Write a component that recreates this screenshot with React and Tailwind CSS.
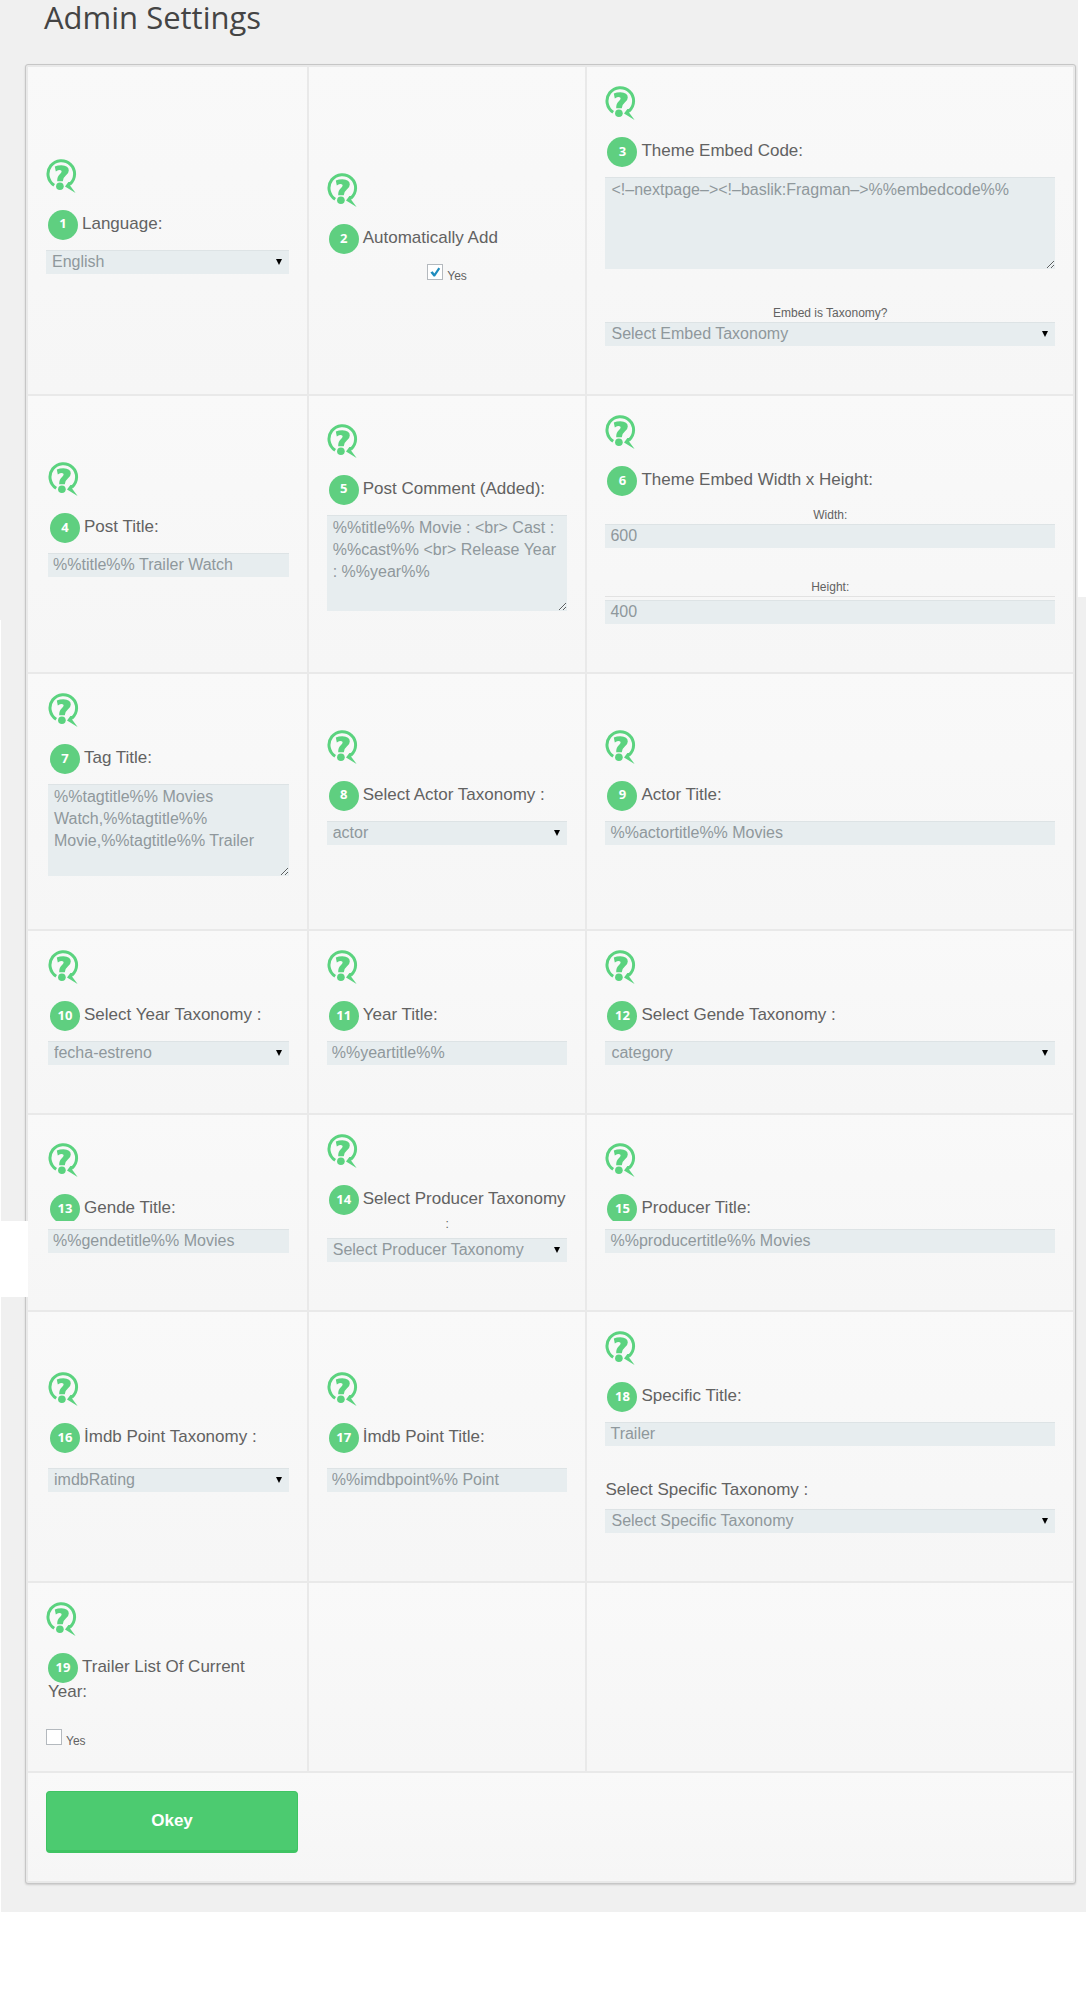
import React from "react";

const CONTROL =
  "block w-full rounded-none bg-[#e7edef] text-base text-[#8f989c] shadow-[inset_0_1px_0_#dde3e5] outline-none focus:ring-1 focus:ring-[#5fcf80]";

function HelpIcon() {
  return (
    <svg viewBox="0 0 31 34" className="block h-[34px] w-[31px]" role="img" aria-label="Help">
      <path d="M8.2 26.2 A13.3 13.3 0 1 1 24 25" fill="none" stroke="#5bd37f" strokeWidth="3" />
      <path d="M26.2 23 L24.2 26.8 L29.6 34 L19 27.6 L22.4 23 Z" fill="#5bd37f" />
      <path
        d="M8.8 7.6 Q11.6 6.2 15.4 6.2 Q22.8 6.4 22.8 11.4 Q22.8 14.4 19.6 16.8 Q16.8 19 16.8 22.2 L11.2 22.2 Q11 17.6 14 15 Q16.4 12.8 15.2 11.4 Q13.4 10.4 9.8 12.4 Z"
        fill="#5bd37f"
      />
      <circle cx="13.9" cy="27.2" r="3.8" fill="#5bd37f" />
    </svg>
  );
}

function Heading({ n, htmlFor, children, secondLine, cut, className = "mb-2.5" }) {
  return (
    <label
      htmlFor={htmlFor}
      className={`mt-[17px] block text-[17px] leading-[25px] text-[#626262] ${className}`}
    >
      <span className={`flex items-start ${cut ? "h-[27px] overflow-hidden" : "h-[30px]"}`}>
        <span className="ml-0.5 mr-1 flex size-[30px] shrink-0 items-center justify-center rounded-full bg-[#5fcf80] pb-0.5 font-['Open_Sans',sans-serif] text-[13px] font-bold text-white">
          {n}
        </span>
        <span className="whitespace-nowrap pt-px">{children}</span>
      </span>
      {secondLine && <span className="-mt-1 ml-0.5 block">{secondLine}</span>}
    </label>
  );
}

function Cell({ children, className = "pb-12 px-[18px]" }) {
  return (
    <div
      className={`flex flex-col justify-center bg-linear-to-b from-[#f9f9f9] to-[#f6f6f6] pt-[19px] ${className}`}
    >
      {children}
    </div>
  );
}

const FIRST = "pb-12 pl-5 pr-[18px]";

function Text({ id, value, label }) {
  return (
    <input id={id} type="text" defaultValue={value} aria-label={label} className={`${CONTROL} h-6 px-[5px]`} />
  );
}

function Area({ id, value, className }) {
  return (
    <textarea
      id={id}
      defaultValue={value}
      className={`${CONTROL} mb-[5px] resize px-1.5 pt-0.5 leading-[22px] ${className}`}
    />
  );
}

function Select({ id, value }) {
  return (
    <div className="relative">
      <select id={id} defaultValue={value} className={`${CONTROL} h-6 appearance-none pl-1.5 pr-6`}>
        <option>{value}</option>
      </select>
      <svg viewBox="0 0 6 6" className="pointer-events-none absolute right-[7px] top-[9px] size-1.5" aria-hidden="true">
        <path d="M0 0H6L3 6Z" fill="#000" />
      </svg>
    </div>
  );
}

function Check({ id, checked, className = "" }) {
  return (
    <div className={`flex items-end gap-1 ${className}`}>
      <span className="relative block size-4">
        <input
          id={id}
          type="checkbox"
          defaultChecked={checked}
          className="peer block size-4 appearance-none border border-[#b4b9be] bg-white"
        />
        <svg
          viewBox="0 0 16 16"
          className="pointer-events-none absolute inset-0 hidden size-4 peer-checked:block"
          aria-hidden="true"
        >
          <path d="M3.4 8.6 L5.6 7.2 L7.4 9.6 L11.4 3.6 L13.2 4.8 L8 12.6 H6.6 Z" fill="#1e8cbe" />
        </svg>
      </span>
      <label htmlFor={id} className="-mb-1 text-xs leading-4 text-[#626262]">
        Yes
      </label>
    </div>
  );
}

function Caption({ htmlFor, children, className = "" }) {
  return (
    <label htmlFor={htmlFor} className={`block text-center text-xs leading-[18px] text-[#626262] ${className}`}>
      {children}
    </label>
  );
}

export default function App() {
  return (
    <div className="min-h-screen bg-white font-['Liberation_Sans',Arial,sans-serif]">
      <main className="relative bg-[#f0f0f0] pb-7 pl-[25px] pr-2.5">
        <div className="absolute right-0 top-0 h-[597px] w-2 bg-white" aria-hidden="true" />
        <div className="absolute bottom-0 left-0 top-[620px] w-px bg-white" aria-hidden="true" />
        <h1 className="h-16 pl-[19px] font-['Open_Sans',sans-serif] text-[31px] leading-[34px] text-[#444]">
          Admin Settings
        </h1>

        <form
          className="grid grid-cols-[minmax(0,279fr)_minmax(0,277fr)_minmax(0,486fr)] gap-0.5 rounded-[3px] border border-[#c6c6c6] bg-[#e9e9e9] p-0.5 shadow-[0_1px_2px_rgba(0,0,0,0.15)]"
          onSubmit={(e) => e.preventDefault()}
        >
          <Cell>
            <HelpIcon />
            <Heading n={1} htmlFor="language">Language:</Heading>
            <Select id="language" value="English" />
          </Cell>
          <Cell className="px-[18px] pb-[27px]">
            <HelpIcon />
            <Heading n={2} htmlFor="auto-add">Automatically Add</Heading>
            <Check id="auto-add" checked className="justify-center" />
          </Cell>
          <Cell>
            <HelpIcon />
            <Heading n={3} htmlFor="embed-code">Theme Embed Code:</Heading>
            <Area id="embed-code" value="<!–nextpage–><!–baslik:Fragman–>%%embedcode%%" className="h-[92px]" />
            <Caption htmlFor="embed-tax" className="mt-[30px]">Embed is Taxonomy?</Caption>
            <Select id="embed-tax" value="Select Embed Taxonomy" />
          </Cell>

          <Cell className={FIRST}>
            <HelpIcon />
            <Heading n={4} htmlFor="post-title">Post Title:</Heading>
            <Text id="post-title" value="%%title%% Trailer Watch" />
          </Cell>
          <Cell>
            <HelpIcon />
            <Heading n={5} htmlFor="post-comment">Post Comment (Added):</Heading>
            <Area
              id="post-comment"
              value="%%title%% Movie : <br> Cast : %%cast%% <br> Release Year : %%year%%"
              className="h-24"
            />
          </Cell>
          <Cell>
            <HelpIcon />
            <Heading n={6} htmlFor="embed-width">Theme Embed Width x Height:</Heading>
            <Caption htmlFor="embed-width">Width:</Caption>
            <Text id="embed-width" value="600" />
            <Caption htmlFor="embed-height" className="mb-[3px] mt-[30px] border-b border-[#e2e2e2]">
              Height:
            </Caption>
            <Text id="embed-height" value="400" />
          </Cell>

          <Cell className={FIRST}>
            <HelpIcon />
            <Heading n={7} htmlFor="tag-title">Tag Title:</Heading>
            <Area
              id="tag-title"
              value="%%tagtitle%% Movies Watch,%%tagtitle%% Movie,%%tagtitle%% Trailer"
              className="h-[92px]"
            />
          </Cell>
          <Cell>
            <HelpIcon />
            <Heading n={8} htmlFor="actor-tax">Select Actor Taxonomy :</Heading>
            <Select id="actor-tax" value="actor" />
          </Cell>
          <Cell>
            <HelpIcon />
            <Heading n={9} htmlFor="actor-title">Actor Title:</Heading>
            <Text id="actor-title" value="%%actortitle%% Movies" />
          </Cell>

          <Cell className={FIRST}>
            <HelpIcon />
            <Heading n={10} htmlFor="year-tax">Select Year Taxonomy :</Heading>
            <Select id="year-tax" value="fecha-estreno" />
          </Cell>
          <Cell>
            <HelpIcon />
            <Heading n={11} htmlFor="year-title">Year Title:</Heading>
            <Text id="year-title" value="%%yeartitle%%" />
          </Cell>
          <Cell>
            <HelpIcon />
            <Heading n={12} htmlFor="gende-tax">Select Gende Taxonomy :</Heading>
            <Select id="gende-tax" value="category" />
          </Cell>

          <Cell className={`${FIRST} relative`}>
            <div className="absolute -left-7 top-[106px] h-[76px] w-7 bg-white" aria-hidden="true" />
            <HelpIcon />
            <Heading n={13} htmlFor="gende-title" cut className="mb-2">Gende Title:</Heading>
            <Text id="gende-title" value="%%gendetitle%% Movies" />
          </Cell>
          <Cell>
            <HelpIcon />
            <Heading n={14} htmlFor="producer-tax" className="mb-0">Select Producer Taxonomy</Heading>
            <Caption htmlFor="producer-tax" className="mb-[5px]">:</Caption>
            <Select id="producer-tax" value="Select Producer Taxonomy" />
          </Cell>
          <Cell>
            <HelpIcon />
            <Heading n={15} htmlFor="producer-title" cut className="mb-2">Producer Title:</Heading>
            <Text id="producer-title" value="%%producertitle%% Movies" />
          </Cell>

          <Cell className={FIRST}>
            <HelpIcon />
            <Heading n={16} htmlFor="imdb-tax" className="mb-[15px]">İmdb Point Taxonomy :</Heading>
            <Select id="imdb-tax" value="imdbRating" />
          </Cell>
          <Cell>
            <HelpIcon />
            <Heading n={17} htmlFor="imdb-title" className="mb-[15px]">İmdb Point Title:</Heading>
            <Text id="imdb-title" value="%%imdbpoint%% Point" />
          </Cell>
          <Cell>
            <HelpIcon />
            <Heading n={18} htmlFor="specific-title">Specific Title:</Heading>
            <Text id="specific-title" value="Trailer" />
            <label
              htmlFor="specific-tax"
              className="mb-[7px] mt-[31px] block text-[17px] leading-[25px] text-[#626262]"
            >
              Select Specific Taxonomy :
            </label>
            <Select id="specific-tax" value="Select Specific Taxonomy" />
          </Cell>

          <Cell className="px-[18px] pb-[26px]">
            <HelpIcon />
            <Heading n={19} htmlFor="current-year" secondLine="Year:" className="mb-[25px]">
              Trailer List Of Current
            </Heading>
            <Check id="current-year" />
          </Cell>
          <Cell />
          <Cell />

          <div className="col-span-3 bg-linear-to-b from-[#f9f9f9] to-[#f6f6f6] pb-7 pl-[18px] pt-[18px]">
            <button
              type="submit"
              className="block h-[62px] w-[252px] rounded border border-b-3 border-[#3fc463] bg-[#4ccb70] text-[17px] font-bold text-white hover:bg-[#45c469]"
            >
              Okey
            </button>
          </div>
        </form>
      </main>
    </div>
  );
}
